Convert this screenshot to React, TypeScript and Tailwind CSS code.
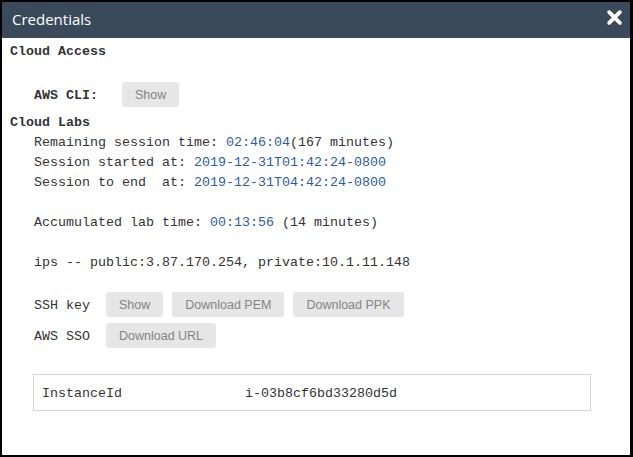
import React from "react";

const mono = "font-['Liberation_Mono','Courier_New',monospace] text-[13.33px] leading-[20px] text-[#333]";
const btn =
  "h-[25px] rounded-[3px] bg-[#e6e6e6] px-[13px] font-['Liberation_Sans',Arial,sans-serif] text-[12.5px] text-[#858585]";

function Val({ children }: { children: React.ReactNode }) {
  return <span className="text-[#2b5c9e]">{children}</span>;
}

export default function App() {
  return (
    <div className="w-[633px] h-[457px] bg-black pt-[2px] pl-[2px] pr-[3px] pb-[2px]">
      <div className="flex h-full flex-col bg-white">
        {/* Title bar */}
        <div className="relative flex h-[36px] items-center bg-[#3a4a5a] pb-[1px] pl-[10px]">
          <span className="font-['Open_Sans',sans-serif] text-[15px] text-white">Credentials</span>
          <svg
            viewBox="0 0 16 16"
            className="absolute right-[7px] top-[7px] h-[17px] w-[17px]"
            fill="none"
            stroke="white"
            strokeWidth="3.6"
            strokeLinecap="round"
          >
            <path d="M3 3 L13 13 M13 3 L3 13" />
          </svg>
        </div>

        {/* Body */}
        <div className={`flex flex-col pl-[8px] pt-[4px] ${mono}`}>
          <div className="font-bold">Cloud Access</div>

          <div className="mt-[20px] flex items-center pl-[24px]">
            <span className="w-[88px] pt-[3px] font-bold">AWS CLI:</span>
            <button className={btn}>Show</button>
          </div>

          <div className="mt-[6px] font-bold">Cloud Labs</div>

          <div className="flex flex-col pl-[24px]">
            <div>
              Remaining session time: <Val>02:46:04</Val>(167 minutes)
            </div>
            <div>
              Session started at: <Val>2019-12-31T01:42:24-0800</Val>
            </div>
            <div className="whitespace-pre">
              Session to end  at: <Val>2019-12-31T04:42:24-0800</Val>
            </div>
            <div className="mt-[20px]">
              Accumulated lab time: <Val>00:13:56</Val> (14 minutes)
            </div>
            <div className="mt-[20px]">ips -- public:3.87.170.254, private:10.1.11.148</div>

            <div className="mt-[19px] flex flex-col gap-[6px]">
              <div className="flex items-center">
                <span className="w-[72px] pt-[3px]">SSH key</span>
                <div className="flex gap-[9px]">
                  <button className={btn}>Show</button>
                  <button className={btn}>Download PEM</button>
                  <button className={btn}>Download PPK</button>
                </div>
              </div>
              <div className="flex items-center">
                <span className="w-[72px] pt-[3px]">AWS SSO</span>
                <button className={btn}>Download URL</button>
              </div>
            </div>
          </div>

          <div className="mt-[26px] ml-[23px] mr-[39px] flex h-[37px] items-center border border-[#d6d6d6] pl-[8px] pt-[3px]">
            <span className="w-[203px]">InstanceId</span>
            <span>i-03b8cf6bd33280d5d</span>
          </div>
        </div>
      </div>
    </div>
  );
}
